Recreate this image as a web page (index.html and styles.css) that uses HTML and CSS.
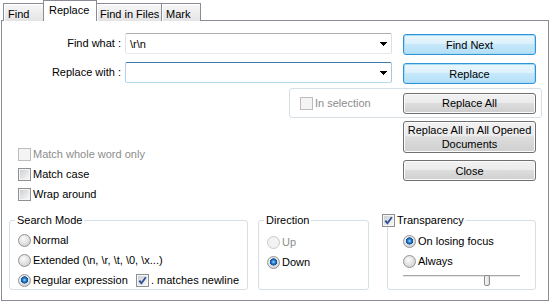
FILE: index.html
```html
<!DOCTYPE html>
<html lang="en">
<head>
    <meta charset="UTF-8">
    <title>Replace</title>
    <link rel="stylesheet" href="styles.css">
</head>
<body>
    <div class="tabs">
        <div class="tab tab-find">Find</div>
        <div class="tab tab-replace active">Replace</div>
        <div class="tab tab-files">Find in Files</div>
        <div class="tab tab-mark">Mark</div>
    </div>

    <div class="panel">
        <div class="field-row first">
            <label class="field-label">Find what :</label>
            <div class="combo">
                <span class="combo-text">\r\n</span>
                <svg class="combo-arrow" width="7" height="4" viewBox="0 0 7 4"><polygon points="0,0 7,0 3.5,4" fill="#000"/></svg>
            </div>
            <button class="btn default">Find Next</button>
        </div>

        <div class="field-row second">
            <label class="field-label">Replace with :</label>
            <div class="combo focused">
                <span class="combo-text"></span>
                <svg class="combo-arrow" width="7" height="4" viewBox="0 0 7 4"><polygon points="0,0 7,0 3.5,4" fill="#000"/></svg>
            </div>
            <button class="btn default">Replace</button>
        </div>

        <div class="selection">
            <div class="option disabled">
                <span class="check"></span>In selection
            </div>
            <button class="btn">Replace All</button>
        </div>

        <div class="lower">
            <div class="options">
                <div class="option disabled"><span class="check"></span>Match whole word only</div>
                <div class="option"><span class="check"></span>Match case</div>
                <div class="option"><span class="check"></span>Wrap around</div>
            </div>
            <div class="side">
                <button class="btn tall">Replace All in All Opened Documents</button>
                <button class="btn">Close</button>
            </div>
        </div>

        <div class="groups">
            <div class="group search-mode">
                <div class="group-title">Search Mode</div>
                <div class="group-rows">
                    <div class="option"><span class="radio"></span>Normal</div>
                    <div class="option"><span class="radio"></span>Extended (\n, \r, \t, \0, \x...)</div>
                    <div class="option">
                        <span class="regex-label"><span class="radio on"></span>Regular expression</span>
                        <span class="check on"><svg width="9" height="9" viewBox="0 0 9 9"><path d="M1.3 4.6 L3.4 7.2 L7.8 1.2" fill="none" stroke="#334f96" stroke-width="1.9"/></svg></span>. matches newline
                    </div>
                </div>
            </div>

            <div class="group direction">
                <div class="group-title">Direction</div>
                <div class="group-rows">
                    <div class="option disabled"><span class="radio"></span>Up</div>
                    <div class="option"><span class="radio on"></span>Down</div>
                </div>
            </div>

            <div class="group transparency">
                <div class="group-title">
                    <span class="check on"><svg width="9" height="9" viewBox="0 0 9 9"><path d="M1.3 4.6 L3.4 7.2 L7.8 1.2" fill="none" stroke="#334f96" stroke-width="1.9"/></svg></span>Transparency
                </div>
                <div class="group-rows">
                    <div class="option"><span class="radio on"></span>On losing focus</div>
                    <div class="option"><span class="radio"></span>Always</div>
                </div>
                <div class="slider">
                    <div class="slider-track"></div>
                    <div class="slider-thumb"></div>
                </div>
            </div>
        </div>
    </div>
</body>
</html>
```

FILE: styles.css
```css
body {
    margin: 0;
    font-family: "Liberation Sans", Arial, sans-serif;
    font-size: 11px;
    color: #000000;
    background-color: #ffffff;
}

/* tabs */
.tabs {
    display: flex;
    align-items: flex-end;
    height: 21px;
    margin-bottom: -1px;
    padding-left: 3px;
}
.tab {
    box-sizing: border-box;
    height: 18px;
    padding-top: 2px;
    line-height: 16px;
    border: 1px solid #898c95;
    border-bottom: none;
    background: linear-gradient(#f7f7f7, #e4e4e4);
    box-shadow: inset 1px 1px 0 #ffffff;
    margin-left: -1px;
    white-space: nowrap;
}
.tab-find {
    margin-left: 0;
    width: 41px;
    padding-left: 4px;
}
.tab-replace {
    width: 54px;
    padding-left: 5px;
}
.tab-files {
    width: 66px;
    padding-left: 3px;
}
.tab-mark {
    width: 40px;
    padding-left: 4px;
}
.tab.active {
    position: relative;
    z-index: 1;
    height: 21px;
    padding-top: 1px;
    background: #ffffff;
    box-shadow: none;
}

/* panel */
.panel {
    box-sizing: border-box;
    width: 548px;
    height: 281px;
    margin-left: 1px;
    border: 1px solid #898c95;
}

.field-row {
    display: flex;
    align-items: flex-start;
}
.field-row.first {
    margin-top: 12px;
}
.field-row.second {
    margin-top: 7px;
}
.field-label {
    width: 119px;
    margin-right: 4px;
    text-align: right;
    line-height: 21px;
}
.combo {
    box-sizing: border-box;
    display: flex;
    align-items: center;
    justify-content: space-between;
    width: 267px;
    height: 21px;
    padding: 0 4px;
    border: 1px solid;
    border-color: #abadb3 #dbdfe6 #e3e9ef #e2e3ea;
    border-radius: 2px;
    background-color: #ffffff;
}
.combo.focused {
    border-color: #3d7bad #a4c9e3 #b7d9ed #b5cfe7;
}
.combo-arrow {
    display: block;
    shape-rendering: crispEdges;
}

/* buttons */
.btn {
    box-sizing: border-box;
    width: 133px;
    height: 21px;
    padding: 0 2px;
    margin: 0;
    font-family: inherit;
    font-size: 11px;
    color: #000000;
    border: 1px solid #707070;
    border-radius: 3px;
    background: linear-gradient(#f2f2f2, #ebebeb 45%, #dddddd 50%, #cfcfcf);
    box-shadow: inset 0 0 0 1px #fbfbfb;
}
.field-row .btn {
    margin-left: 11px;
    margin-top: 1px;
}
.btn.default {
    border-color: #2f93d8;
    background: linear-gradient(#eaf6fd, #dcf1fc 45%, #c6e8fb 50%, #b3dff6);
    box-shadow: inset 0 0 0 1px #a6dcf6;
}
.btn.tall {
    height: 32px;
    line-height: 14px;
}

/* in selection box */
.selection {
    box-sizing: border-box;
    display: flex;
    align-items: center;
    width: 253px;
    height: 30px;
    margin: 4px 0 0 287px;
    padding: 0 5px 0 10px;
    border: 1px solid #d5dfe5;
    border-radius: 3px;
}
.selection .btn {
    margin-left: auto;
}

/* options */
.option {
    display: flex;
    align-items: center;
    height: 20px;
    white-space: nowrap;
}
.option.disabled {
    color: #8d8d8d;
}
.lower {
    display: flex;
}
.options {
    box-sizing: border-box;
    width: 401px;
    padding: 26px 0 0 16px;
}
.side {
    display: flex;
    flex-direction: column;
    gap: 7px;
    padding-top: 3px;
}

/* check boxes and radios */
.check {
    box-sizing: border-box;
    flex: none;
    width: 13px;
    height: 13px;
    margin-right: 2px;
    padding: 1px;
    border: 1px solid #8e8f8f;
    background: linear-gradient(135deg, #cdd0d5, #f7f7f7) content-box, #f6f6f6;
}
.check svg {
    display: block;
}
.disabled .check {
    border-color: #bdbdbd;
    background: #f4f4f4;
}
.radio {
    box-sizing: border-box;
    flex: none;
    width: 13px;
    height: 13px;
    margin-right: 2px;
    border: 1px solid #939393;
    border-radius: 50%;
    background: radial-gradient(circle at 40% 35%, #fbfbfb, #d3d3d3 80%);
}
.radio.on {
    background: radial-gradient(circle at 50% 45%, #a8dcff 0, #2d88d6 1.6px, #0f4f9a 3.2px, #0f4f9a 3.4px, transparent 3.8px),
        radial-gradient(circle at 40% 35%, #fbfbfb, #d3d3d3 80%);
}
.disabled .radio {
    border-color: #cacaca;
    background: #f2f2f2;
}
.regex-label {
    display: flex;
    align-items: center;
    width: 122px;
}

/* groups */
.groups {
    display: flex;
    align-items: flex-start;
    margin-top: 16px;
    padding-left: 7px;
}
.group {
    box-sizing: border-box;
    height: 70px;
    padding: 0 8px;
    border: 1px solid #d5dfe5;
    border-radius: 3px;
}
.group-title {
    display: flex;
    align-items: center;
    width: fit-content;
    margin: -8px 0 0 -3px;
    padding: 0 2px;
    line-height: 14px;
    background-color: #ffffff;
    white-space: nowrap;
}
.search-mode {
    width: 239px;
}
.search-mode .group-rows {
    margin-top: 3px;
}
.direction {
    width: 111px;
    margin-left: 10px;
}
.direction .group-rows {
    margin-top: 5px;
}
.transparency {
    width: 149px;
    margin-left: 18px;
    padding-left: 15px;
}
.transparency .group-title {
    margin-left: -21px;
    padding: 0 2px 0 0;
}
.transparency .group-rows {
    margin-top: 4px;
}

/* slider */
.slider {
    position: relative;
    width: 117px;
    height: 12px;
}
.slider-track {
    margin-top: 4px;
    height: 2px;
    background: linear-gradient(#a9a9a9 50%, #e4e6e8 50%);
}
.slider-thumb {
    position: absolute;
    left: 81px;
    top: 0;
    box-sizing: border-box;
    width: 6px;
    height: 11px;
    border: 1px solid #8a8a8a;
    border-radius: 2px;
    background: linear-gradient(90deg, #fafafa, #dcdcdc);
}
```
